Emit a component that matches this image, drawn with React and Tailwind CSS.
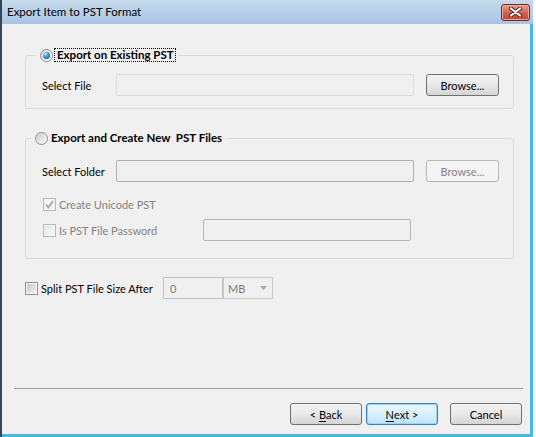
import React from "react";

function Radio({ checked }) {
  return (
    <span className="flex h-[13px] w-[13px] shrink-0 items-center justify-center rounded-full border border-[#8e8f8f] bg-linear-to-br from-[#d6d6d6] to-white">
      {checked ? (
        <span className="h-[7px] w-[7px] rounded-full bg-[radial-gradient(circle_at_35%_30%,#c4e8ff_0%,#3d8fd0_45%,#0c4a80_100%)]" />
      ) : (
        <span className="h-[9px] w-[9px] rounded-full bg-linear-to-br from-[#cdcdcd] to-[#f7f7f7]" />
      )}
    </span>
  );
}

function Check({ checked, disabled }) {
  return (
    <span
      className={
        disabled
          ? "flex h-[13px] w-[13px] shrink-0 items-center justify-center border border-[#b8b8b8] bg-[#f4f4f4]"
          : "flex h-[13px] w-[13px] shrink-0 items-center justify-center border border-[#8e8f8f] bg-white"
      }
    >
      {checked ? (
        <svg width="11" height="11" viewBox="0 0 11 11">
          <path d="M2 5.5 L4.3 8.5 L9 2" fill="none" stroke="#a6a6a6" strokeWidth="1.7" />
        </svg>
      ) : (
        <span
          className={
            disabled
              ? "h-[9px] w-[9px] bg-linear-to-br from-[#e6e6e6] to-[#f8f8f8]"
              : "h-[9px] w-[9px] bg-linear-to-br from-[#c3c8ce] to-[#f2f2f2]"
          }
        />
      )}
    </span>
  );
}

function Button({ children, disabled, primary, className }) {
  let look =
    "border-[#707070] bg-linear-to-b from-[#f3f3f3] via-[#e9e9e9] to-[#d4d4d4] text-black";
  if (disabled) look = "border-[#b5b8ba] bg-[#f4f4f4] text-[#838383]";
  if (primary)
    look =
      "border-[#3c7fb1] bg-linear-to-b from-[#eaf6fd] via-[#d9f0fc] to-[#bde4f8] text-black shadow-[inset_0_0_0_1px_#9cd4f2]";
  return (
    <div
      className={
        "flex h-[22px] items-center justify-center rounded-[3px] border " +
        look +
        " " +
        className
      }
    >
      {children}
    </div>
  );
}

export default function App() {
  return (
    <div className="h-[437px] w-[536px] bg-white font-['Lato',sans-serif] text-[11px] leading-none text-black">
      <div className="flex h-full w-[533px] flex-col border-l-2 border-[#33465e]">
        {/* title bar */}
        <div className="flex h-[24px] shrink-0 items-center justify-between bg-linear-to-b from-[#c7daee] to-[#a9c4e1] pl-[5px] pr-[3px]">
          <span className="text-[11.5px] text-black">Export Item to PST Format</span>
          <div className="flex h-[17px] w-[29px] items-center justify-center rounded-[3px] border border-[#6e2b24] bg-linear-to-b from-[#e6a190] via-[#cf6454] to-[#c0412f] shadow-[inset_0_0_0_1px_#eaa89a]">
            <svg width="13" height="10" viewBox="0 0 13 10">
              <path d="M2 1.5 L11 8.5 M11 1.5 L2 8.5" stroke="#5a1f18" strokeWidth="4" strokeLinecap="round" />
              <path d="M2 1.5 L11 8.5 M11 1.5 L2 8.5" stroke="#ffffff" strokeWidth="2.2" strokeLinecap="round" />
            </svg>
          </div>
        </div>

        {/* body */}
        <div className="flex flex-1 flex-col border-b-[3px] border-r-[3px] border-[#4ab6e4] bg-[#f0f0f0]">
          <fieldset className="ml-[23px] mt-[24px] w-[489px] rounded-[3px] border border-[#d9d9d9] pb-[12px] pl-[10px] pt-[12px]">
            <legend className="flex h-[14px] items-center pl-[4px] pr-[3px]">
              <Radio checked />
              <span className="ml-[1px] border border-dotted border-black pl-[2px] pr-[1px] text-[11.5px] font-bold leading-[12px]">
                Export on Existing PST
              </span>
            </legend>
            <div className="flex items-center pl-[6px]">
              <span className="w-[74px]">Select File</span>
              <div className="h-[22px] w-[298px] rounded-[2px] border border-[#dadada] bg-[#f0f0f0]" />
              <Button className="ml-[12px] h-[21px] w-[73px]">Browse...</Button>
            </div>
          </fieldset>

          <fieldset className="ml-[23px] mt-[22px] w-[489px] rounded-[3px] border border-[#d9d9d9] pb-[17px] pl-[5px] pt-[15px]">
            <legend className="flex h-[14px] items-center pl-[4px] pr-[5px]">
              <Radio />
              <span className="ml-[3px] whitespace-pre text-[11.5px] font-bold">Export and Create New  PST Files</span>
            </legend>
            <div className="flex items-center pl-[11px]">
              <span className="w-[74px]">Select Folder</span>
              <div className="h-[22px] w-[298px] rounded-[2px] border border-[#b0b0b0] bg-[#f0f0f0]" />
              <Button disabled className="ml-[12px] h-[21px] w-[73px]">
                Browse...
              </Button>
            </div>
            <div className="mt-[14px] flex h-[16px] items-center pl-[12px] text-[#838383]">
              <Check checked disabled />
              <span className="ml-[3px]">Create Unicode PST</span>
            </div>
            <div className="mt-[7px] flex h-[22px] items-center pl-[12px] text-[#838383]">
              <Check disabled />
              <span className="ml-[3px] w-[144px]">Is PST File Password</span>
              <div className="h-[22px] w-[208px] rounded-[2px] border border-[#b5b5b5] bg-[#f0f0f0]" />
            </div>
          </fieldset>

          <div className="ml-[23px] mt-[18px] flex h-[22px] items-center">
            <Check />
            <span className="ml-[3px] w-[122px] whitespace-nowrap">Split PST File Size After</span>
            <div className="flex h-[22px] w-[60px] items-center border border-[#c3c3c3] bg-[#f0f0f0] pl-[6px] text-[#7a7a7a]">
              0
            </div>
            <div className="flex h-[22px] w-[50px] items-center justify-between border border-[#c9c9c9] bg-[#f0f0f0] pl-[4px] pr-[5px] text-[#7a7a7a]">
              <span>MB</span>
              <svg width="7" height="4" viewBox="0 0 7 4">
                <path d="M0 0 L7 0 L3.5 4 Z" fill="#a8a8a8" />
              </svg>
            </div>
          </div>

          <div className="mt-auto flex flex-col pb-[9px]">
            <div className="ml-[12px] w-[509px] border-t border-[#a0a0a0]" />
            <div className="mt-[14px] flex justify-end pr-[8px]">
              <Button className="w-[72px]">
                &lt;&nbsp;<span className="underline underline-offset-2">B</span>ack
              </Button>
              <Button primary className="ml-[4px] w-[72px]">
                <span className="underline underline-offset-2">N</span>ext &gt;
              </Button>
              <Button className="ml-[12px] w-[72px]">Cancel</Button>
            </div>
          </div>
        </div>
      </div>
    </div>
  );
}
